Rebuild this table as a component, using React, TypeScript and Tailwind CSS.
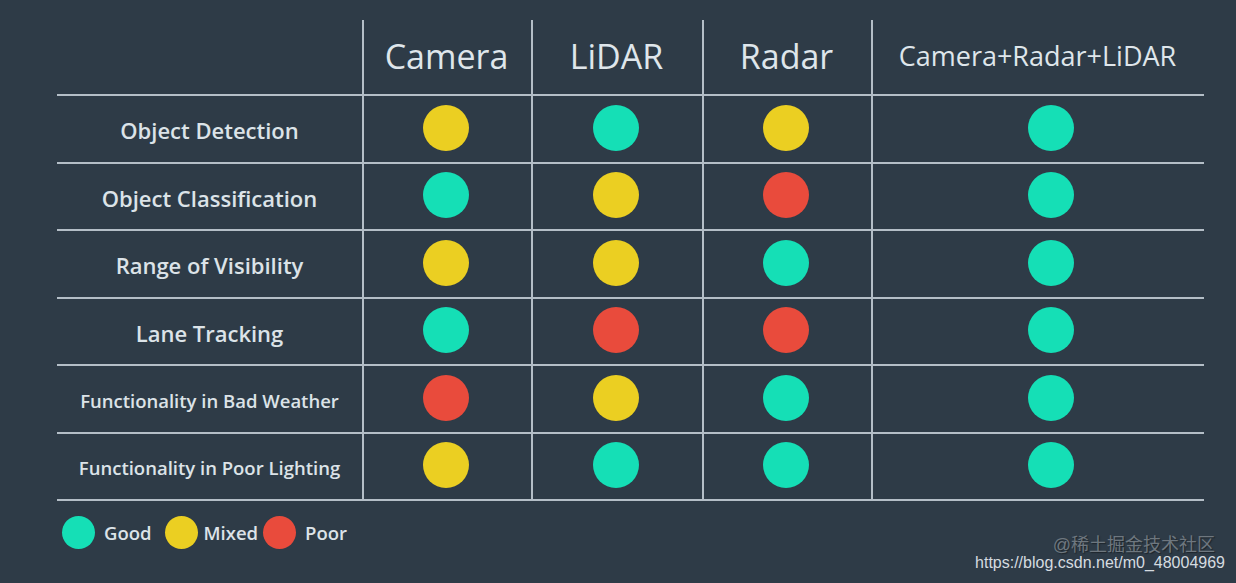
const GOOD = 'bg-[#15dfb6]';
const MIXED = 'bg-[#ebcf22]';
const POOR = 'bg-[#e94b3c]';

type R = 'g' | 'm' | 'p';
const DOT: Record<R, string> = { g: GOOD, m: MIXED, p: POOR };

const ROWS: { label: string; small?: boolean; vals: R[] }[] = [
  { label: 'Object Detection', vals: ['m', 'g', 'm', 'g'] },
  { label: 'Object Classification', vals: ['g', 'm', 'p', 'g'] },
  { label: 'Range of Visibility', vals: ['m', 'm', 'g', 'g'] },
  { label: 'Lane Tracking', vals: ['g', 'p', 'p', 'g'] },
  { label: 'Functionality in Bad Weather', small: true, vals: ['p', 'm', 'g', 'g'] },
  { label: 'Functionality in Poor Lighting', small: true, vals: ['m', 'g', 'g', 'g'] },
];

const HEADS = ['Camera', 'LiDAR', 'Radar', 'Camera+Radar+LiDAR'];

export default function App() {
  return (
    <div
      className="relative w-[1236px] h-[583px] overflow-hidden bg-[#2e3b47] text-[#dfe6eb]"
      style={{ fontFamily: '"Open Sans", "Noto Sans", sans-serif' }}
    >
      <div className="ml-[57px] mt-[20px] w-[1147px] grid grid-cols-[305px_169px_171px_169px_333px]">
        {/* header */}
        <div className="h-[76px] border-b-2 border-[#b4bec7]" />
        {HEADS.map((h, i) => (
          <div
            key={h}
            className={`h-[76px] border-b-2 border-l-2 border-[#b4bec7] flex items-center justify-center pb-[2px] ${
              i === 3 ? 'text-[27px] pr-[2px]' : 'text-[34px] pr-[2px]'
            }`}
          >
            {h}
          </div>
        ))}

        {ROWS.map(row => (
          <div key={row.label} className="contents">
            <div
              className={`h-[67.5px] border-b-2 border-[#b4bec7] flex items-center justify-center font-semibold text-[#dce3e8] pt-[4px] ${
                row.small ? 'text-[18.5px]' : 'text-[22px]'
              }`}
            >
              {row.label}
            </div>
            {row.vals.map((v, i) => (
              <div
                key={i}
                className={`h-[67.5px] border-b-2 border-l-2 border-[#b4bec7] flex items-center justify-center pb-[2px] ${
                  i === 3 ? 'pl-[24px]' : 'pr-[4px]'
                }`}
              >
                <span className={`w-[46px] h-[46px] rounded-full ${DOT[v]}`} />
              </div>
            ))}
          </div>
        ))}
      </div>

      {/* legend */}
      <div className="ml-[62px] mt-[15px] flex items-center text-[18.5px] font-semibold text-[#dce3e8]">
        <span className={`w-[33px] h-[33px] rounded-full ${GOOD}`} />
        <span className="ml-[9px]">Good</span>
        <span className={`ml-[13px] w-[33px] h-[33px] rounded-full ${MIXED}`} />
        <span className="ml-[6px]">Mixed</span>
        <span className={`ml-[5px] w-[33px] h-[33px] rounded-full ${POOR}`} />
        <span className="ml-[9px]">Poor</span>
      </div>

      {/* watermark */}
      <div
        className="absolute right-[11px] bottom-[11px] flex flex-col items-end leading-[18px]"
        style={{ fontFamily: '"Liberation Sans", "Noto Sans CJK SC", sans-serif' }}
      >
        <span className="mr-[10px] text-[18px] text-[#6e777f] [text-shadow:1px_1px_1px_#1d252c]">@稀土掘金技术社区</span>
        <span className="text-[16px] text-[#d5dbe0]">https://blog.csdn.net/m0_48004969</span>
      </div>
    </div>
  );
}
